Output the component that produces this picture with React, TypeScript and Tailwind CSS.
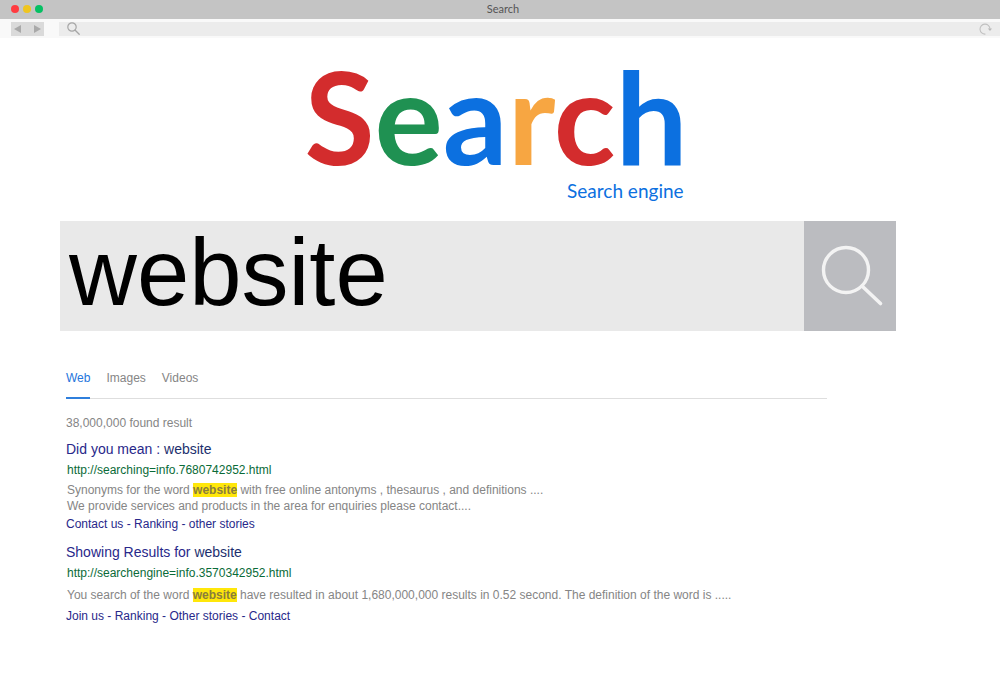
import React, { useState } from "react";

const logoLetters = [
  { letter: "S", color: "text-[#d32c2d]" },
  { letter: "e", color: "text-[#1f9152]" },
  { letter: "a", color: "text-[#0c70e0]" },
  { letter: "r", color: "text-[#f7a642]" },
  { letter: "c", color: "text-[#d32c2d]" },
  { letter: "h", color: "text-[#0c70e0]" },
];

const tabs = ["Web", "Images", "Videos"];

const Highlight: React.FC<{ children: React.ReactNode }> = ({ children }) => (
  <mark className="bg-[#ffe70a] text-[#8a7d3c] font-bold">{children}</mark>
);

const TitleBar: React.FC<{}> = () => (
  <header className="relative flex h-[19px] items-center justify-center bg-[#c4c4c4] pb-0.5">
    <div className="absolute left-[11px] top-[5px] flex gap-1">
      <span className="size-2 rounded-full bg-[#ff3b40]" />
      <span className="size-2 rounded-full bg-[#efc51f]" />
      <span className="size-2 rounded-full bg-[#05c063]" />
    </div>
    <span className="pl-1.5 font-['Lato',sans-serif] text-[11px] leading-4 text-[#555555]">Search</span>
  </header>
);

const Toolbar: React.FC<{}> = () => (
  <div className="flex h-[19px] items-center bg-[#f9f9f9] pl-[11px]">
    <div className="flex h-3.5 w-[33px] items-center justify-between bg-[#dadada] px-[3px]">
      <button aria-label="Back">
        <svg className="block" width="7" height="8" viewBox="0 0 7 8">
          <path d="M7 0v8L0 4z" fill="#a9a9a9" />
        </svg>
      </button>
      <button aria-label="Forward">
        <svg className="block" width="7" height="8" viewBox="0 0 7 8">
          <path d="M0 0v8l7-4z" fill="#a9a9a9" />
        </svg>
      </button>
    </div>
    <div className="ml-[15px] flex h-3.5 flex-1 items-center bg-[#ececec] pl-2 pr-2">
      <svg width="13" height="13" viewBox="0 0 13 13" fill="none" stroke="#a6a6a6">
        <circle cx="5" cy="5" r="4.2" strokeWidth="1.2" />
        <path d="M8.2 8.2l4 4" strokeWidth="1.3" strokeLinecap="round" />
      </svg>
      <input aria-label="Address" className="h-3 min-w-0 flex-1 bg-transparent px-2 text-[11px] outline-none" />
      <button aria-label="Reload">
        <svg className="block" width="13" height="12" viewBox="0 0 13 12">
          <path d="M6.4 11.1A5 5 0 1 1 11 5.8" fill="none" stroke="#c0c0c0" strokeWidth="1.1" />
          <path d="M8.8 5.4h4.2l-2 2.6z" fill="#b8b8b8" />
        </svg>
      </button>
    </div>
  </div>
);

const Logo: React.FC<{}> = () => (
  <div className="mx-auto flex w-fit flex-col items-end pr-2 pt-3.5 font-['Lato',sans-serif]">
    <h1 className="text-[128px] font-bold leading-[127px]">
      {logoLetters.map(({ letter, color }, i) => (
        <span key={i} className={color}>{letter}</span>
      ))}
    </h1>
    <p className="pr-1 text-[19px] leading-6 text-[#0c70e0]">Search engine</p>
  </div>
);

const SearchBox: React.FC<{}> = () => {
  const [query, setQuery] = useState("website");
  return (
    <form className="ml-[60px] mr-[104px] mt-[18px] flex h-[110px]" onSubmit={(e) => e.preventDefault()}>
      <input
        aria-label="Search"
        className="min-w-0 flex-1 bg-[#e9e9e9] px-[9px] pb-1.5 text-[94px] leading-[104px] text-black outline-none"
        value={query}
        onChange={(e) => setQuery(e.target.value)}
      />
      <button aria-label="Submit search" className="flex w-[92px] items-center justify-center bg-[#bbbcc0] pl-1.5">
        <svg width="64" height="62" viewBox="0 0 64 62" fill="none" stroke="#f3f3f3">
          <circle cx="25" cy="25" r="22.5" strokeWidth="3.4" />
          <path d="M41 41L59.5 58.5" strokeWidth="3.6" strokeLinecap="round" />
        </svg>
      </button>
    </form>
  );
};

interface ResultProps {
  title: string;
  url: string;
  links: string[];
  className?: string;
  bodyClass?: string;
  children: React.ReactNode;
}

const Result: React.FC<ResultProps> = ({ title, url, links, className, bodyClass, children }) => (
  <article className={className}>
    <h2 className="text-[14px] leading-5 text-[#28288a]">
      <a href="#">
        {title} <span className="text-[#1c2f6e]">website</span>
      </a>
    </h2>
    <a href="#" className="mt-[3px] block pl-px text-[#0a6b38]">{url}</a>
    <p className={bodyClass}>{children}</p>
    <p className="text-[#28288a]">
      {links.map((link, i) => (
        <React.Fragment key={link}>
          {i > 0 && " - "}
          <a href="#">{link}</a>
        </React.Fragment>
      ))}
    </p>
  </article>
);

export default function App() {
  const [active, setActive] = useState("Web");
  return (
    <div className="min-h-screen bg-white font-['Liberation_Sans',Arial,sans-serif] text-[12px] leading-4 text-[#858585]">
      <TitleBar />
      <Toolbar />
      <main>
        <Logo />
        <SearchBox />
        <section className="ml-[66px] mr-[104px] mt-[39px]">
          <nav className="mr-[69px] flex gap-4 border-b border-[#dedede]">
            {tabs.map((tab) => (
              <button
                key={tab}
                onClick={() => setActive(tab)}
                className={
                  active === tab
                    ? "-mb-px border-b-2 border-[#2f7fdc] pb-[11px] text-[#2576dc]"
                    : "-mb-px border-b-2 border-transparent pb-[11px]"
                }
              >
                {tab}
              </button>
            ))}
          </nav>
          <p className="mt-4">38,000,000 found result</p>
          <Result
            className="mt-2"
            bodyClass="mt-1 mb-0.5 pl-px"
            title="Did you mean :"
            url="http://searching=info.7680742952.html"
            links={["Contact us", "Ranking", "other stories"]}
          >
            Synonyms for the word <Highlight>website</Highlight> with free online antonyms , thesaurus , and definitions ....
            <br />
            We provide services and products in the area for enquiries please contact....
          </Result>
          <Result
            className="mt-2.5"
            bodyClass="mt-1.5 mb-[5px] pl-px"
            title="Showing Results for"
            url="http://searchengine=info.3570342952.html"
            links={["Join us", "Ranking", "Other stories", "Contact"]}
          >
            You search of the word <Highlight>website</Highlight> have resulted in about 1,680,000,000 results in 0.52
            second. The definition of the word is .....
          </Result>
        </section>
      </main>
    </div>
  );
}
